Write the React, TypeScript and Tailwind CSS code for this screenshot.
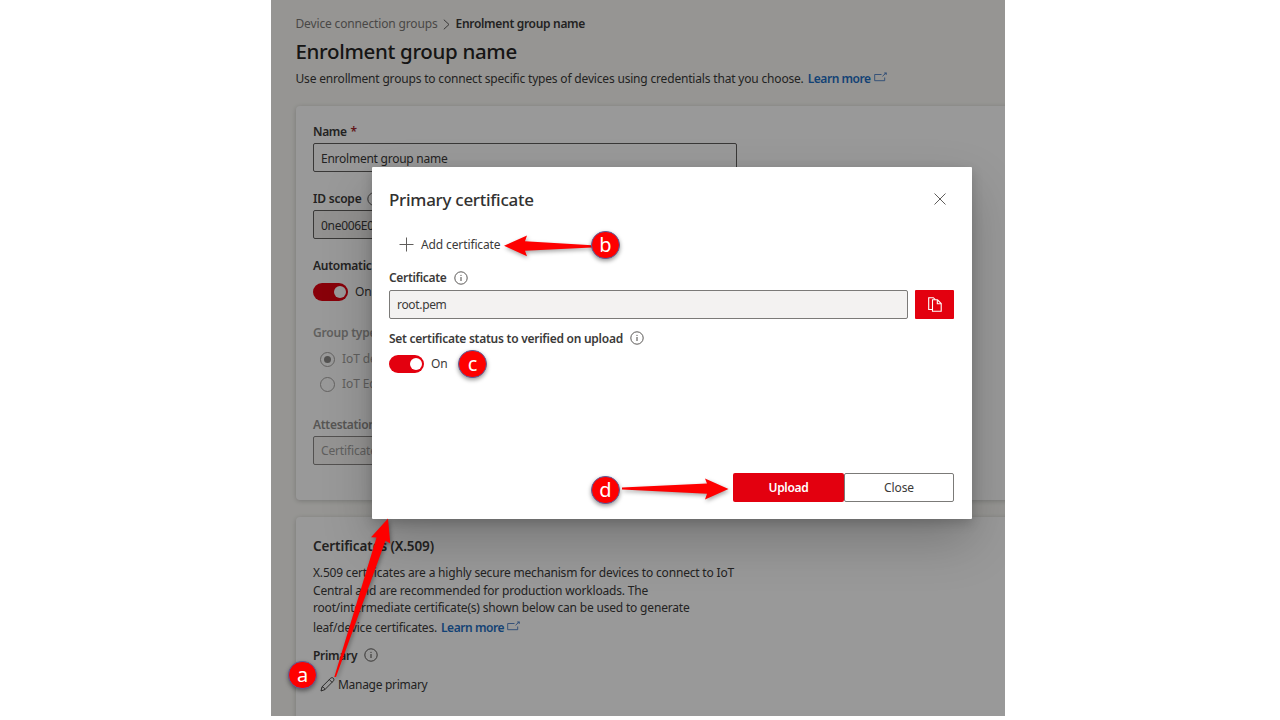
import type { ReactNode } from "react";

function InfoIcon({ className = "" }: { className?: string }) {
  return (
    <svg className={"mb-px h-[14px] w-[14px] shrink-0 " + className} viewBox="0 0 14 14" fill="none">
      <circle cx="7" cy="7" r="6.2" stroke="#484644" strokeWidth="0.9" />
      <path d="M7 6v4" stroke="#484644" strokeWidth="1" />
      <circle cx="7" cy="4.3" r="0.6" fill="#484644" />
    </svg>
  );
}

function ExternalIcon() {
  return (
    <svg className="mb-[4px] ml-[3px] h-[10px] w-[13px] shrink-0" viewBox="0 0 13 10" fill="none" stroke="#4a7cc4">
      <path d="M7.500 2.500H.700v6.200h10V5.500" strokeWidth="0.9" />
      <path d="M8.500 4.300 11.800 1.200" strokeWidth="0.9" />
      <path d="M10.200 1h2v1.800" strokeWidth="1.1" />
    </svg>
  );
}

function Toggle() {
  return (
    <div className="flex h-[18px] w-[35px] shrink-0 items-center justify-end rounded-full bg-[#e3000f] pr-[2.5px]">
      <div className="h-[11.5px] w-[11.5px] rounded-full bg-white" />
    </div>
  );
}

function Radio({ checked = false }: { checked?: boolean }) {
  return (
    <div className="ml-[7px] flex h-[15px] w-[15px] shrink-0 items-center justify-center rounded-full border border-[#a6a4a2]">
      {checked && <div className="h-[7px] w-[7px] rounded-full bg-[#8d8b89]" />}
    </div>
  );
}

function Label({ children, className = "" }: { children: ReactNode; className?: string }) {
  return <div className={"flex h-5 items-center font-semibold " + className}>{children}</div>;
}

function Badge({ letter, className }: { letter: string; className: string }) {
  return (
    <div
      className={
        "absolute flex h-[28px] w-[29px] items-center justify-center rounded-full border border-[#5a5f9c] bg-[#fe0000] text-[20px] leading-none text-white shadow-[0_2px_4px_rgba(0,0,0,0.4)] " +
        className
      }
    >
      <span>{letter}</span>
    </div>
  );
}

function Page() {
  return (
    <div className="h-full w-full bg-[#faf9f5] pl-[24.5px] pt-[14px]">
      <div className="flex h-5 items-center">
        <span className="tracking-[-0.15px] text-[#7a7876]">Device connection groups</span>
        <svg className="mx-[5.5px] h-[11px] w-[7px]" viewBox="0 0 7 11" fill="none" stroke="#605e5c" strokeWidth="1">
          <path d="m.8.7 5.200 4.800L.8 10.300" />
        </svg>
        <span className="font-semibold tracking-[-0.31px]">Enrolment group name</span>
      </div>
      <div className="flex h-9 items-center pb-[2px] text-[20.5px] font-medium tracking-[-0.33px] text-[#252423]">
        Enrolment group name
      </div>
      <div className="flex h-[18px] items-center">
        <span className="tracking-[-0.18px]">
          Use enrollment groups to connect specific types of devices using credentials that you choose.
        </span>
        <span className="ml-[4px] font-semibold tracking-[-0.45px] text-[#1f6fc4]">Learn more</span>
        <ExternalIcon />
      </div>

      <div className="mt-[18px] h-[394px] w-[740px] rounded-[4px] bg-white px-[17.5px] pt-4 shadow-[0_1px_5px_rgba(0,0,0,0.2)]">
        <Label className="gap-1 tracking-[-0.37px]">
          Name <span className="text-[#a4262c]">*</span>
        </Label>
        <div className="mt-px flex h-[29px] w-[424px] items-center rounded-[2px] border border-[#605e5c] pl-[7px] pt-[2px] tracking-[-0.245px]">
          Enrolment group name
        </div>
        <Label className="mt-[17px] gap-[6px] tracking-[-0.22px]">
          ID scope <InfoIcon />
        </Label>
        <div className="mt-px flex h-[29px] w-[424px] items-center rounded-[2px] border border-[#605e5c] bg-[#f3f2f1] pl-[7px] pt-[2px] tracking-[-0.3px]">
          0ne006E0C1A
        </div>
        <Label className="mt-[17px] tracking-[-0.25px]">Automatic</Label>
        <div className="mt-[7px] flex h-[18px] items-center gap-[7px]">
          <Toggle />
          <span>On</span>
        </div>
        <Label className="mt-[22px] tracking-[-0.2px] text-[#a19f9d]">Group type</Label>
        <div className="mt-[7px] flex h-[18px] items-center gap-[7px] tracking-[-0.1px] text-[#a19f9d]">
          <Radio checked />
          IoT devices
        </div>
        <div className="mt-[7px] flex h-[18px] items-center gap-[7px] tracking-[-0.1px] text-[#a19f9d]">
          <Radio />
          IoT Edge devices
        </div>
        <Label className="mt-[22px] tracking-[-0.3px] text-[#918f8d]">Attestation type</Label>
        <div className="mt-px flex h-[29px] w-[424px] items-center rounded-[2px] border border-[#8a8886] bg-[#f8f7f6] pl-[7px] tracking-[-0.15px] text-[#a19f9d]">
          Certificates (X.509)
        </div>
      </div>

      <div className="mt-[17px] h-[260px] w-[740px] rounded-[4px] bg-white px-[17.5px] pt-5 shadow-[0_1px_5px_rgba(0,0,0,0.2)]">
        <Label className="pb-px text-[13.5px] tracking-[-0.1px]">Certificates (X.509)</Label>
        <div className="mt-[7px] leading-[17.7px] tracking-[-0.185px]">
          <p>X.509 certificates are a highly secure mechanism for devices to connect to IoT</p>
          <p>Central and are recommended for production workloads. The</p>
          <p>root/intermediate certificate(s) shown below can be used to generate</p>
          <p className="mt-[2px] flex items-center">
            leaf/device certificates.
            <span className="ml-[4px] font-semibold tracking-[-0.45px] text-[#1f6fc4]">Learn more</span>
            <ExternalIcon />
          </p>
        </div>
        <Label className="mt-[9px] gap-[7px] tracking-[-0.3px]">
          Primary <InfoIcon />
        </Label>
        <div className="mt-[10px] flex h-[18px] items-center pl-[7px] tracking-[-0.29px]">
          <svg className="mr-[3px] h-[15px] w-[15px]" viewBox="0 0 15 15" fill="none" stroke="#323130" strokeWidth="0.9">
            <path d="M1 14 2 9.800 10.600 1.300c.8-.8 2-.8 2.700-.1.8.8.8 2 0 2.800L4.900 12.600 1 14Z" />
            <path d="m2 9.800c1.300.1 2.600 1.300 2.900 2.800M9.300 2.600l2.800 2.800" />
          </svg>
          Manage primary
        </div>
      </div>
    </div>
  );
}

function CertificateDialog() {
  return (
    <div className="absolute left-[101px] top-[167px] flex h-[352px] w-[600px] flex-col rounded-[1px] bg-white pl-[17px] pr-[18px] text-[#3b3a39] shadow-[0_22px_50px_rgba(0,0,0,0.22),0_4px_12px_rgba(0,0,0,0.18)]">
      <div className="mt-[18px] flex h-7 items-center justify-between pr-[8px]">
        <h2 className="pt-px text-[17px] font-medium tracking-[-0.28px] text-[#323130]">Primary certificate</h2>
        <svg className="mb-px h-3 w-3" viewBox="0 0 12 12" stroke="#605e5c" strokeWidth="1">
          <path d="m.5.5 11 11M11.500.5l-11 11" />
        </svg>
      </div>
      <div className="mt-[22px] flex h-5 items-center pl-[10px] tracking-[-0.12px]">
        <svg className="mb-px mr-[7px] h-[15px] w-[15px]" viewBox="0 0 15 15" stroke="#605e5c" strokeWidth="1">
          <path d="M7.500 .5v14M.5 7.500h14" />
        </svg>
        Add certificate
      </div>
      <Label className="mt-[13px] gap-[7px] tracking-[-0.31px]">
        Certificate <InfoIcon />
      </Label>
      <div className="mt-[2px] flex h-[29px] gap-[7px]">
        <div className="flex grow items-center rounded-[2px] border border-[#7b7a78] bg-[#f3f2f1] pl-[7px] tracking-[-0.33px]">
          root.pem
        </div>
        <div className="flex w-[39px] items-center justify-center rounded-[1px] bg-[#e3000f]">
          <svg className="h-[15px] w-[14px]" viewBox="0 0 14 15" fill="none" stroke="white" strokeWidth="1.1">
            <path d="M4.500 12.500H.700V.700h4.600l2 2" />
            <path d="M4.500 2.800h5l3.700 3.700v7.700H4.500Z" />
            <path d="M9.300 3v3.700H13" />
          </svg>
        </div>
      </div>
      <Label className="mt-[9px] gap-[7px] pt-px tracking-[-0.256px]">
        Set certificate status to verified on upload <InfoIcon />
      </Label>
      <div className="mt-[7px] flex h-[18px] items-center gap-[7px]">
        <Toggle />
        <span>On</span>
      </div>
      <div className="mt-auto mb-[17px] flex h-[29px] justify-end">
        <div className="flex w-[111px] items-center justify-center rounded-[2px] bg-[#e3000f] font-semibold tracking-[-0.3px] text-white">
          Upload
        </div>
        <div className="flex w-[110px] items-center justify-center rounded-[2px] border border-[#7b7a78] tracking-[-0.08px]">
          Close
        </div>
      </div>
    </div>
  );
}

function Annotations() {
  return (
    <>
      <svg
        className="absolute left-0 top-0 h-[716px] w-[734px] drop-shadow-[1px_2px_2px_rgba(0,0,0,0.35)]"
        viewBox="271 0 734 716"
        fill="#fe0000"
      >
        <path d="M504 245.800 527 235.500 525 241.300 592 245.300V247.500L525 250.700 527 256.200Z" />
        <path d="M728.500 489 705 478.500 707 483.500 622 487.500V489.500L707 493.700 705 499.500Z" />
        <path d="M388 518.500 371 537.300 376.500 537.500 334.300 677H336L385.500 540.800 390.300 543.600Z" />
      </svg>
      <Badge letter="a" className="left-[17px] top-[661px]" />
      <Badge letter="b" className="left-[320px] top-[231px]" />
      <Badge letter="c" className="left-[187px] top-[350px]" />
      <Badge letter="d" className="left-[320px] top-[476px]" />
    </>
  );
}

export default function App() {
  return (
    <div className="flex h-[720px] justify-center overflow-hidden bg-white pr-1 font-['Noto_Sans',sans-serif] text-[12px] text-[#3b3a39]">
      <div className="relative h-[716px] w-[734px] overflow-hidden whitespace-nowrap">
        <Page />
        <div className="absolute inset-0 bg-black/40" />
        <CertificateDialog />
        <Annotations />
      </div>
    </div>
  );
}
